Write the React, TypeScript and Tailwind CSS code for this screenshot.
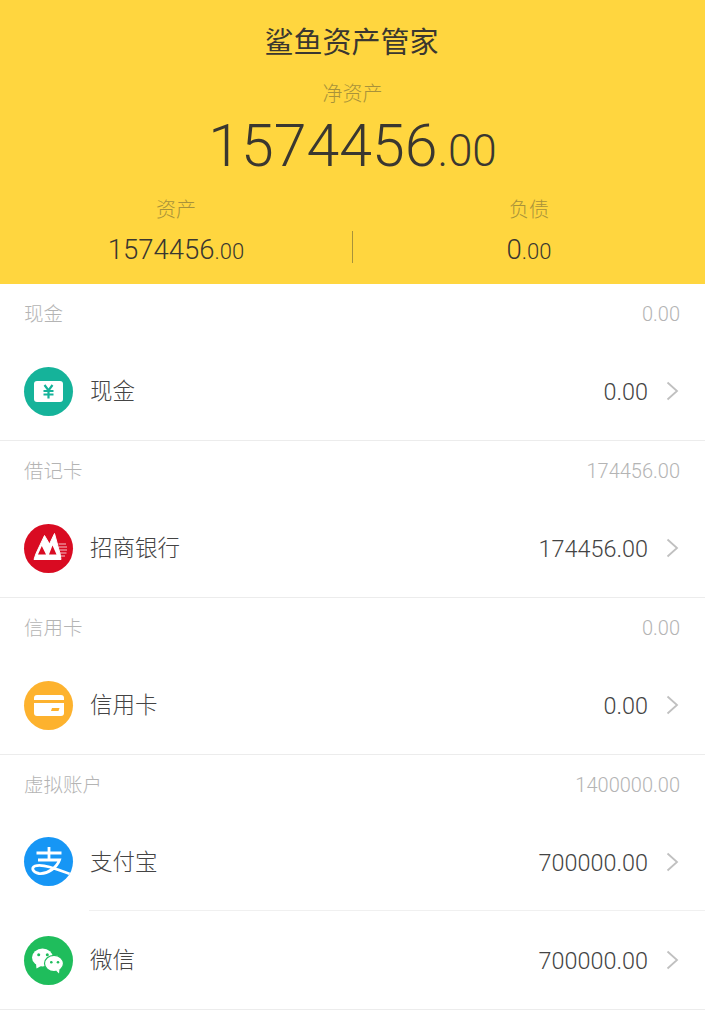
const FONT = "font-['Roboto','Noto_Sans_CJK_SC',sans-serif]"

function CashIcon() {
  return (
    <div className="w-[49px] h-[49px] rounded-full bg-[#15b39a] flex items-center justify-center shrink-0">
      <svg width="29" height="21" viewBox="0 0 29 21">
        <rect width="29" height="21" rx="3" fill="#fff" />
        <path d="M10.5 4 L14.5 9.5 L18.5 4 M14.5 9.5 V17.5 M9.5 10 H19.5 M9.5 13.5 H19.5" fill="none" stroke="#15b39a" strokeWidth="2.2" />
      </svg>
    </div>
  )
}

function BankIcon() {
  return (
    <div className="w-[49px] h-[49px] rounded-full bg-[#d90b22] shrink-0">
      <svg width="49" height="49" viewBox="0 0 49 49">
        <path d="M10 35.5 L12 29.5 L20.5 11.5 L25.5 20 L30.5 9.5 L36 29.5 L37 35.5 Z" fill="#fff" stroke="#fff" strokeWidth="1" strokeLinejoin="round" />
        <path d="M14 30.5 L17.8 22 L22 30.5 Z M25 30.5 L28.5 21.5 L32.5 30.5 Z" fill="#d90b22" />
        <path d="M34.5 20 H42 M35 23 H43 M35.5 26 H43 M36 29 H42.5 M36.5 32 H41" stroke="#fff" strokeWidth="1.2" opacity="0.75" />
      </svg>
    </div>
  )
}

function CardIcon() {
  return (
    <div className="w-[49px] h-[49px] rounded-full bg-[#fdb22e] flex items-center justify-center shrink-0">
      <svg width="30" height="21" viewBox="0 0 30 21">
        <path d="M3 0 H27 A3 3 0 0 1 30 3 V5 H0 V3 A3 3 0 0 1 3 0 Z" fill="#fff" />
        <path d="M0 8 H30 V18 A3 3 0 0 1 27 21 H3 A3 3 0 0 1 0 18 Z" fill="#fff" />
        <path d="M18 13 H25.5 L24.5 16 H17 Z" fill="#fdb22e" />
      </svg>
    </div>
  )
}

function AlipayIcon() {
  return (
    <div className="w-[49px] h-[49px] rounded-full bg-[#1696f5] overflow-hidden shrink-0">
      <svg width="49" height="49" viewBox="0 0 49 49">
        <path
          d="M12.5 16 H37.5 M25 10 V23 M14 23 H35.5 C33 30 24 37.5 15 36.5 C8.5 35.5 7 30.5 11 29 C18 26.5 30 31 50 38.5"
          fill="none"
          stroke="#fff"
          strokeWidth="2.8"
        />
      </svg>
    </div>
  )
}

function WechatIcon() {
  return (
    <div className="w-[49px] h-[49px] rounded-full bg-[#1fbd5c] shrink-0">
      <svg width="49" height="49" viewBox="0 0 49 49">
        <ellipse cx="18.5" cy="21.5" rx="10.5" ry="9" fill="#fff" />
        <path d="M12 28 L12.5 32.5 L18 29.5 Z" fill="#fff" />
        <ellipse cx="30" cy="27.5" rx="9.5" ry="8.2" fill="#fff" stroke="#1fbd5c" strokeWidth="1.2" />
        <path d="M32 34.5 L35 37.5 L35.5 33 Z" fill="#fff" />
        <circle cx="14.7" cy="18.7" r="1.5" fill="#1fbd5c" />
        <circle cx="23.3" cy="18.7" r="1.5" fill="#1fbd5c" />
        <circle cx="27.3" cy="26.3" r="1.3" fill="#1fbd5c" />
        <circle cx="34" cy="26.3" r="1.3" fill="#1fbd5c" />
      </svg>
    </div>
  )
}

function Chevron() {
  return (
    <svg width="13" height="20" viewBox="0 0 13 20" className="ml-[18px] mr-[26px] shrink-0">
      <path d="M1.5 1.5 L11 10 L1.5 18.5" fill="none" stroke="#c0c0c0" strokeWidth="1.8" />
    </svg>
  )
}

function Row({ icon, name, value, h = 'h-[98px]' }: { icon: React.ReactNode; name: string; value: string; h?: string }) {
  return (
    <div className={`flex items-center pl-[24px] ${h}`}>
      {icon}
      <span className="ml-[17px] pt-[2px] text-[22.5px] font-light text-[#444]">{name}</span>
      <span className="ml-auto pt-[4px] text-[23.4px] font-light text-[#444]">{value}</span>
      <Chevron />
    </div>
  )
}

function Section({ title, total, children }: { title: string; total: string; children: React.ReactNode }) {
  return (
    <section className="border-b border-[#ececec]">
      <div className="h-[58px] pt-[2px] flex items-center justify-between pl-6 pr-[25px] text-[#b4b4b4] font-light">
        <span className="text-[19.5px] pt-[2px]">{title}</span>
        <span className="text-[20px]">{total}</span>
      </div>
      {children}
    </section>
  )
}

function Money({ whole, size, small }: { whole: string; size: string; small: string }) {
  return (
    <p className={`${size} font-light text-[#3a3730] leading-none`}>
      {whole}
      <span className={small}>.00</span>
    </p>
  )
}

export default function App() {
  return (
    <div className={`${FONT} w-[705px] h-[1024px] bg-white overflow-hidden`}>
      <header className="h-[284px] bg-[#ffd63f] flex flex-col items-center">
        <h1 className="mt-[23px] mr-[2px] text-[29px] leading-[40px] font-normal text-[#3a3730]">鲨鱼资产管家</h1>
        <p className="mt-[19px] text-[20px] leading-[24px] font-light text-[#a8923a]">净资产</p>
        <div className="mt-[9px] h-[60px] flex items-center">
          <Money whole="1574456" size="text-[59px]" small="text-[44px]" />
        </div>
        <div className="mt-[23px] w-full flex">
          <div className="flex-1 flex flex-col items-center">
            <span className="text-[20px] leading-[24px] font-light text-[#a8923a]">资产</span>
            <div className="mt-[14px]"><Money whole="1574456" size="text-[27.5px]" small="text-[22px]" /></div>
          </div>
          <div className="w-px h-[32px] mt-[33px] bg-[#a8923a]" />
          <div className="flex-1 flex flex-col items-center">
            <span className="text-[20px] leading-[24px] font-light text-[#a8923a]">负债</span>
            <div className="mt-[14px]"><Money whole="0" size="text-[27.5px]" small="text-[22px]" /></div>
          </div>
        </div>
      </header>

      <Section title="现金" total="0.00">
        <Row icon={<CashIcon />} name="现金" value="0.00" />
      </Section>
      <Section title="借记卡" total="174456.00">
        <Row icon={<BankIcon />} name="招商银行" value="174456.00" />
      </Section>
      <Section title="信用卡" total="0.00">
        <Row icon={<CardIcon />} name="信用卡" value="0.00" />
      </Section>
      <Section title="虚拟账户" total="1400000.00">
        <Row icon={<AlipayIcon />} name="支付宝" value="700000.00" h="h-[97px]" />
        <div className="ml-[89px] h-px bg-[#f0f0f0]" />
        <Row icon={<WechatIcon />} name="微信" value="700000.00" />
      </Section>
    </div>
  )
}
